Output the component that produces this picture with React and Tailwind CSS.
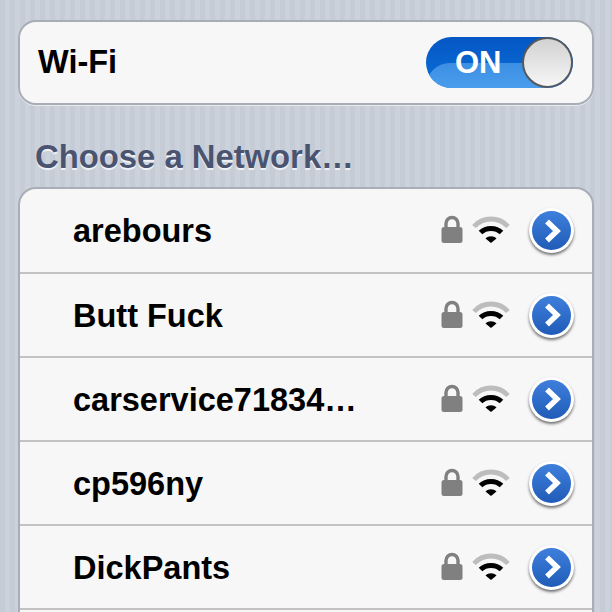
const networks = ["arebours", "Butt Fuck", "carservice71834…", "cp596ny", "DickPants", ""];

const Lock = () => (
  <svg width="24" height="30" viewBox="0 0 24 30" className="block">
    <path d="M6 14V9.5a6 6 0 0 1 12 0V14" fill="none" stroke="#808080" strokeWidth="3.4" />
    <rect x="1.5" y="13" width="21" height="16" rx="2.5" fill="#808080" />
  </svg>
);

const WifiIcon = () => (
  <svg width="38" height="30" viewBox="0 0 38 30" className="block">
    <path d="M2 12.5C11 2.5 27 2.5 36 12.5" fill="none" stroke="#bdbdbd" strokeWidth="4.8" />
    <path d="M8.5 18.5C14 13 24 13 29.5 18.5" fill="none" stroke="#000" strokeWidth="5" />
    <path d="M13.5 24.5L19 29L24.5 24.5C21.5 21.5 16.5 21.5 13.5 24.5Z" fill="#000" />
  </svg>
);

const Chevron = () => (
  <div className="relative flex h-[45px] w-[45px] shrink-0 items-center justify-center rounded-full bg-white shadow-[0_2px_3px_rgba(0,0,0,0.55)]">
    <div className="flex h-[39px] w-[39px] items-center justify-center rounded-full bg-gradient-to-b from-[#3f7fdc] to-[#1f5cb8]">
      <svg width="22" height="26" viewBox="0 0 22 26" className="block">
        <path d="M6 3.5L16 13L6 22.5" fill="none" stroke="#fff" strokeWidth="5.4" />
      </svg>
    </div>
  </div>
);

export default function App() {
  return (
    <div className="h-[612px] w-[612px] overflow-hidden bg-[#c7ced8] bg-[repeating-linear-gradient(90deg,#c5ccd6_0px,#c5ccd6_5px,#cbd2dc_5px,#cbd2dc_10px)] px-[18px] pt-5 font-['Liberation_Sans',Arial,sans-serif]">
      <div className="flex h-[85px] items-center justify-between rounded-[18px] border-2 border-[#a9aeb6] bg-[#f7f7f7] pl-[18px] pr-[19px] shadow-[0_1px_0_#e6e9ee]">
        <span className="text-[32.5px] font-bold text-black">Wi-Fi</span>
        <div className="relative h-[51px] w-[147px] overflow-hidden rounded-full bg-gradient-to-b from-[#0557c4] to-[#0c70d8]">
          <div className="absolute inset-x-0 bottom-0 h-[25px] rounded-tl-[24px] bg-gradient-to-b from-[#3d8fe4] to-[#4a9cec]" />
          <span className="absolute left-[29px] top-[7px] text-[31px] font-bold leading-[37px] text-white">ON</span>
          <div className="absolute right-0 top-0 h-[51px] w-[51px] rounded-full border-2 border-[#55585c] bg-gradient-to-b from-[#d2d2d2] to-[#f6f6f6]" />
        </div>
      </div>

      <h2 className="mt-[30px] pl-[17px] text-[32.8px] font-bold leading-[43px] text-[#4a5470] [text-shadow:0_2px_0_#eef1f5]">
        Choose a Network…
      </h2>

      <div className="mt-[9px] rounded-t-[18px] border-2 border-b-0 border-[#a9aeb6] bg-[#f7f7f7]">
        {networks.map((name, i) => (
          <div
            key={i}
            className={
              i === 0
                ? "flex h-[83px] items-center pl-[53px] pr-[18px]"
                : "flex h-[84px] items-center border-t-2 border-[#c2c2c2] pl-[53px] pr-[18px]"
            }
          >
            <span className="flex-1 pt-[2px] text-[32.5px] font-bold text-black">{name}</span>
            {name && (
              <div className="flex items-center">
                <div className="mb-[3px]">
                  <Lock />
                </div>
                <div className="mb-[3px] ml-[8px] mr-[19px]">
                  <WifiIcon />
                </div>
                <Chevron />
              </div>
            )}
          </div>
        ))}
      </div>
    </div>
  );
}
